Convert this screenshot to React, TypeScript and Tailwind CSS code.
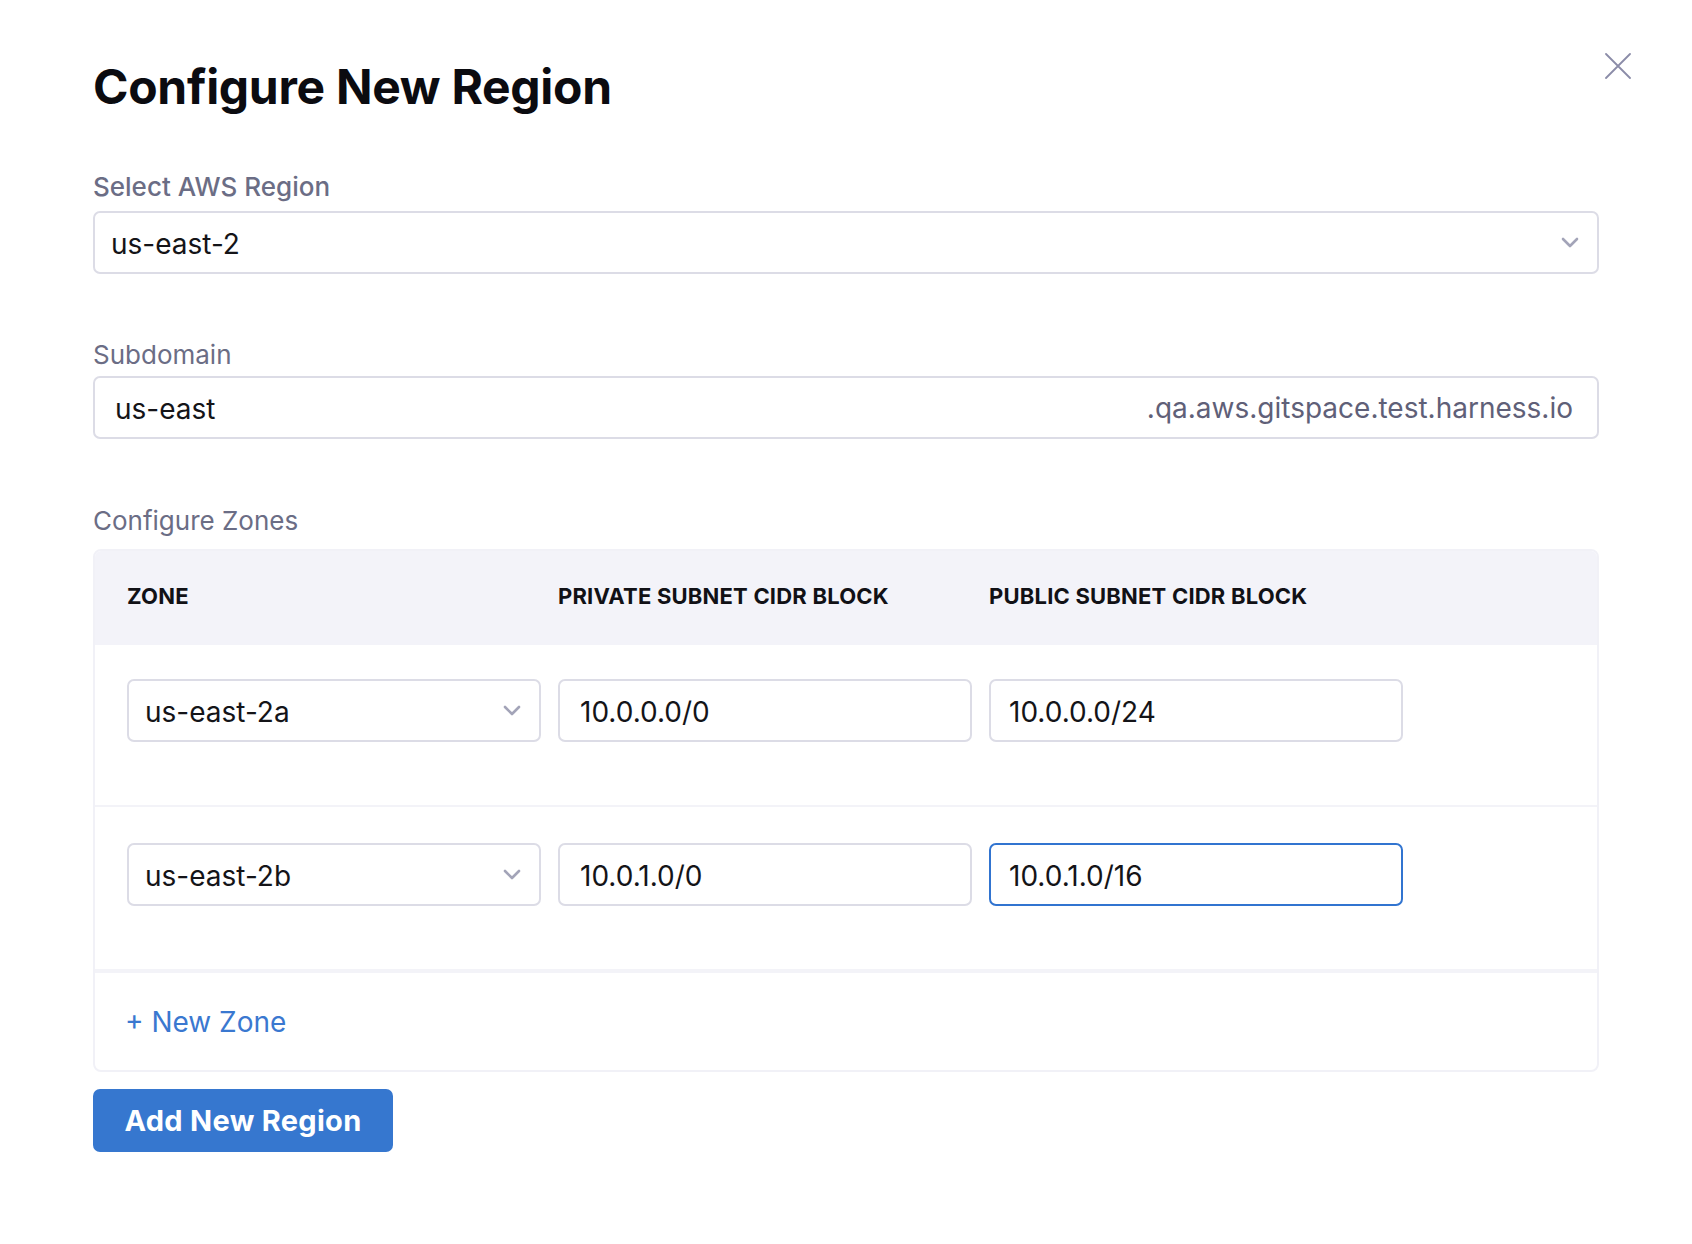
import { useState } from "react";

const zones = [
  { zone: "us-east-2a", priv: "10.0.0.0/0", pub: "10.0.0.0/24", focus: false },
  { zone: "us-east-2b", priv: "10.0.1.0/0", pub: "10.0.1.0/16", focus: true },
];

function Chevron({ className = "" }: { className?: string }) {
  return (
    <svg width="18" height="11" viewBox="0 0 18 11" fill="none" className={className}>
      <path
        d="M2 2l7 7 7-7"
        stroke="#a3a4b8"
        strokeWidth="2.6"
        strokeLinecap="round"
        strokeLinejoin="round"
      />
    </svg>
  );
}

const App = () => {
  const [rows] = useState(zones);

  return (
    <main
      className="relative min-h-[1244px] w-full bg-white px-[93px] pt-[58px]"
      style={{ fontFamily: "Inter, 'Liberation Sans', sans-serif" }}
    >
      {/* Close */}
      <button className="absolute top-[53px] left-[1605px] w-[26px] h-[26px] cursor-pointer">
        <svg width="26" height="26" viewBox="0 0 26 26" fill="none">
          <path d="M1 1l24 24M25 1L1 25" stroke="#8b8ca8" strokeWidth="1.8" strokeLinecap="round" />
        </svg>
      </button>

      <h1 className="text-[48px] leading-[58px] font-bold text-[#0b0b10] tracking-[-0.3px]">
        Configure New Region
      </h1>

      {/* Region select */}
      <div className="mt-[55px]">
        <p className="text-[26px] leading-[32px] font-medium text-[#6b6d85]">Select AWS Region</p>
        <div className="mt-[8px] h-[63px] flex items-center justify-between rounded-[7px] border-2 border-[#dcdce6] pl-[16px] pr-[18px]">
          <span className="text-[28px] leading-[34px] pt-[2px] text-[#141418]">us-east-2</span>
          <Chevron />
        </div>
      </div>

      {/* Subdomain */}
      <div className="mt-[65px]">
        <p className="text-[26px] leading-[32px] text-[#6b6d85]">Subdomain</p>
        <div className="mt-[5px] h-[63px] flex items-center justify-between rounded-[7px] border-2 border-[#dcdce6] pl-[20px] pr-[24px]">
          <span className="text-[28px] leading-[34px] pt-[2px] text-[#141418]">us-east</span>
          <span className="text-[28px] leading-[34px] text-[#5f6078]">.qa.aws.gitspace.test.harness.io</span>
        </div>
      </div>

      {/* Zones */}
      <div className="mt-[66px]">
        <p className="text-[26px] leading-[32px] text-[#6b6d85]">Configure Zones</p>
        <div className="mt-[12px] rounded-[8px] border-2 border-[#f1f1f7] overflow-hidden">
          <div className="h-[94px] bg-[#f3f3f9] grid grid-cols-[414px_414px_414px] gap-x-[17px] items-center px-[32px] pb-[4px] text-[22px] font-bold text-[#111116] tracking-[0.2px]">
            <span>ZONE</span>
            <span>PRIVATE SUBNET CIDR BLOCK</span>
            <span>PUBLIC SUBNET CIDR BLOCK</span>
          </div>
          {rows.map((r, i) => (
            <div
              key={r.zone}
              className={`px-[32px] grid grid-cols-[414px_414px_414px] gap-x-[17px] items-start ${
                i === 0
                  ? "h-[162px] pt-[34px] border-b-2 border-[#f3f3f8]"
                  : "h-[166px] pt-[36px] border-b-4 border-[#f3f3f8]"
              }`}
            >
              <div className="h-[63px] flex items-center justify-between rounded-[7px] border-2 border-[#dcdce6] pl-[16px] pr-[18px]">
                <span className="text-[28px] leading-[34px] pt-[2px] text-[#141418]">{r.zone}</span>
                <Chevron />
              </div>
              <div className="h-[63px] flex items-center rounded-[7px] border-2 border-[#dcdce6] px-[20px]">
                <span className="text-[28px] leading-[34px] pt-[2px] text-[#141418]">{r.priv}</span>
              </div>
              <div
                className={`h-[63px] flex items-center rounded-[7px] border-2 px-[18px] ${
                  r.focus ? "border-[#3174d0]" : "border-[#dcdce6]"
                }`}
              >
                <span className="text-[28px] leading-[34px] pt-[2px] text-[#141418]">{r.pub}</span>
              </div>
            </div>
          ))}
          <div className="h-[97px] flex items-center px-[30px]">
            <button className="text-[28px] text-[#3a78d0] cursor-pointer">+ New Zone</button>
          </div>
        </div>
      </div>

      <button className="mt-[17px] h-[63px] w-[300px] rounded-[7px] bg-[#3677cf] text-white text-[29px] font-bold tracking-[0.3px] cursor-pointer">
        Add New Region
      </button>
    </main>
  );
};

export default App;
